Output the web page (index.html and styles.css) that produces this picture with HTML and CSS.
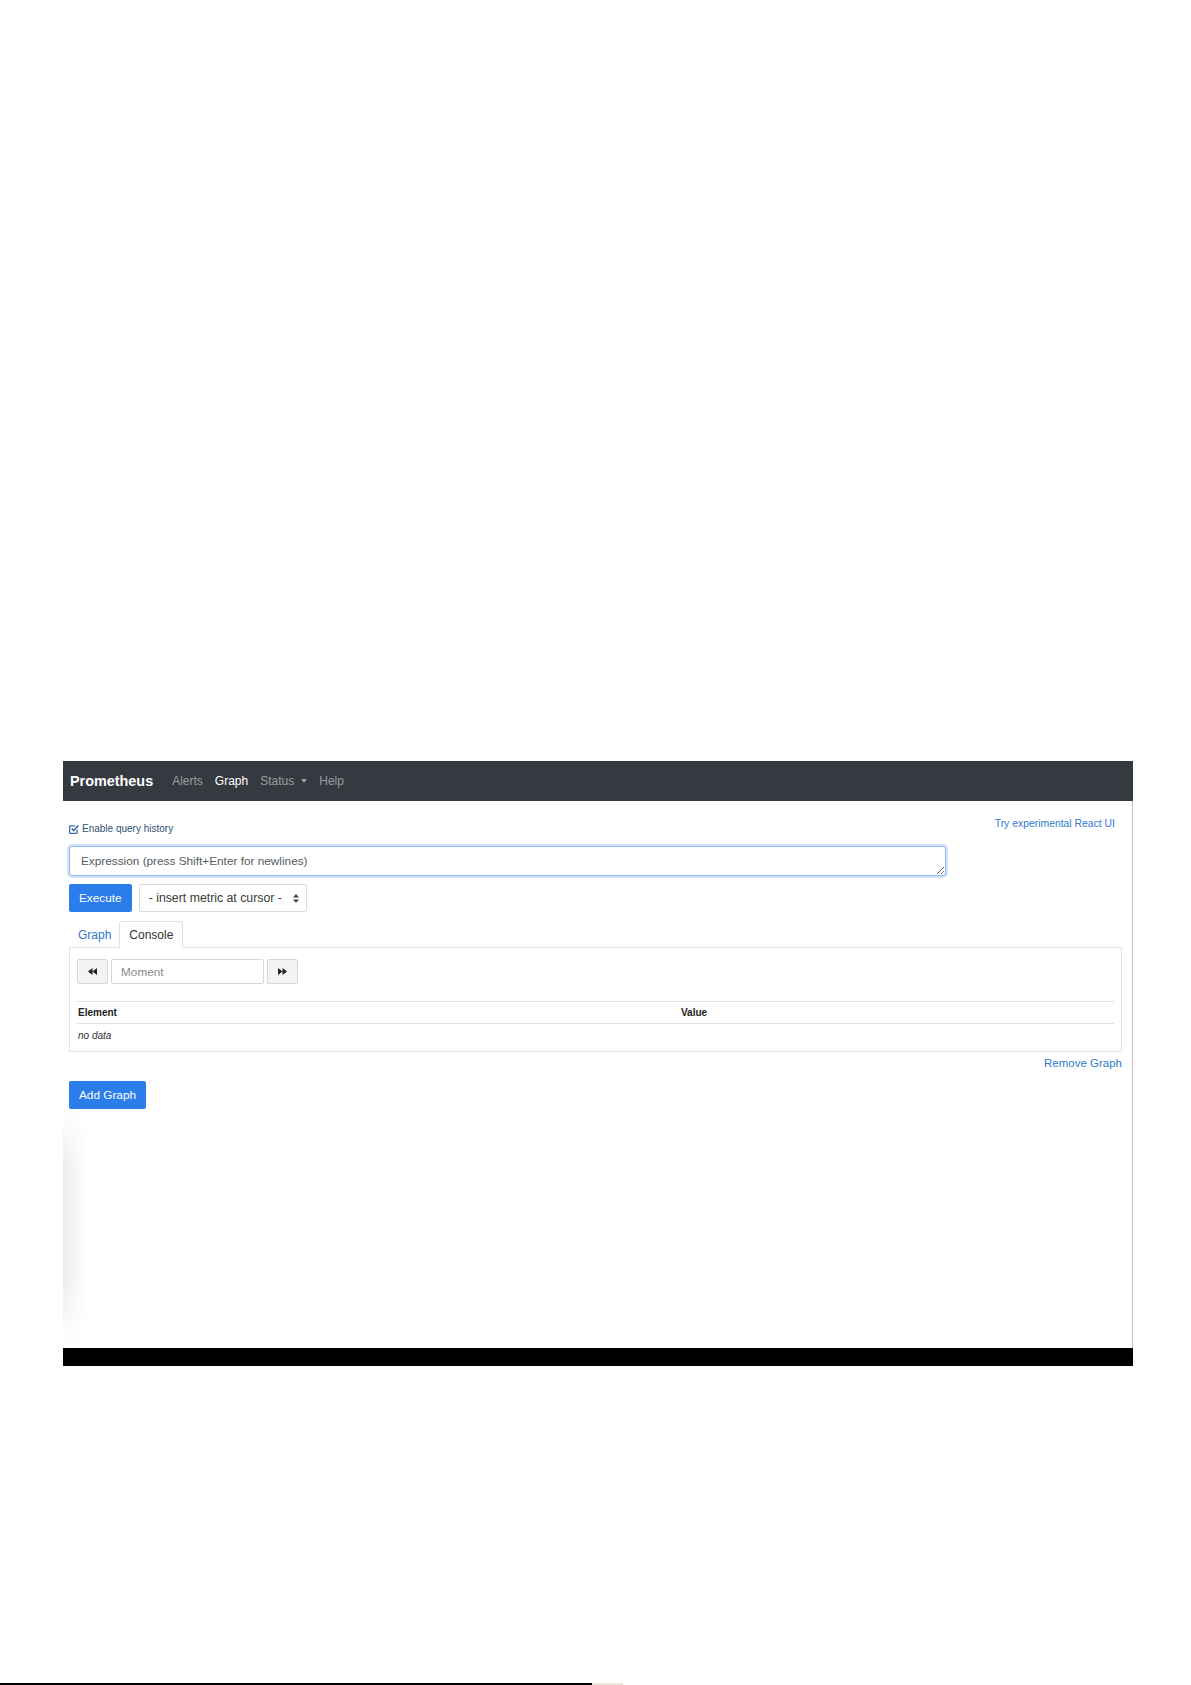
FILE: index.html
```html
<!DOCTYPE html>
<html lang="en">
<head>
  <meta charset="UTF-8" />
  <meta name="viewport" content="width=device-width, initial-scale=1.0"/>
  <title>Prometheus Time Series Collection and Processing Server</title>
  <link rel="stylesheet" href="styles.css">
</head>
<body>
  <div class="shot">
    <nav class="navbar">
      <a class="brand" href="#">Prometheus</a>
      <ul class="nav-links">
        <li><a href="#">Alerts</a></li>
        <li><a class="active" href="#">Graph</a></li>
        <li><a href="#">Status<span class="caret"></span></a></li>
        <li><a href="#">Help</a></li>
      </ul>
    </nav>

    <div class="page">
      <div class="content">
        <div class="top-row">
          <label class="history">
            <svg width="10" height="10" viewBox="0 0 16 16"><path d="M13 9v4.5a1.5 1.5 0 0 1-1.5 1.5h-9A1.5 1.5 0 0 1 1 13.5v-9A1.5 1.5 0 0 1 2.5 3H10" fill="none" stroke="#3d6fae" stroke-width="2.2"/><path d="M4.5 7.5l3 3L15 2.5" fill="none" stroke="#3d6fae" stroke-width="2.6"/></svg>
            Enable query history
          </label>
          <a class="react-link" href="#">Try experimental React UI</a>
        </div>

        <textarea class="expr" placeholder="Expression (press Shift+Enter for newlines)"></textarea>

        <div class="actions">
          <button class="btn">Execute</button>
          <div class="metric-select">
            <span>- insert metric at cursor -</span>
            <svg width="6" height="9" viewBox="0 0 6 9"><path d="M3 0l3 3.5H0z M3 9L0 5.5h6z" fill="#444"/></svg>
          </div>
        </div>

        <ul class="tabs">
          <li><a href="#">Graph</a></li>
          <li><a class="active" href="#">Console</a></li>
        </ul>

        <div class="tab-panel">
          <div class="moment-row">
            <button class="step-btn">
              <svg width="9" height="7" viewBox="0 0 9 7"><path d="M4.5 0v7L0 3.5z M9 0v7L4.5 3.5z" fill="#222"/></svg>
            </button>
            <input class="moment" type="text" placeholder="Moment">
            <button class="step-btn">
              <svg width="9" height="7" viewBox="0 0 9 7"><path d="M0 0v7l4.5-3.5z M4.5 0v7L9 3.5z" fill="#222"/></svg>
            </button>
          </div>

          <table class="data-table">
            <thead>
              <tr><th class="el">Element</th><th>Value</th></tr>
            </thead>
            <tbody>
              <tr><td colspan="2">no data</td></tr>
            </tbody>
          </table>
        </div>

        <div class="remove-row"><a href="#">Remove Graph</a></div>

        <button class="btn add">Add Graph</button>
      </div>
      <div class="fade-space"></div>
    </div>

    <div class="bottom-bar"></div>
  </div>

  <div class="page-edge">
    <span class="edge-line"></span>
    <span class="edge-mark"></span>
  </div>
</body>
</html>
```

FILE: styles.css
```css
body {
  margin: 0;
  background: #fff;
  font-family: "Liberation Sans", Arial, sans-serif;
  color: #212529;
}
.shot {
  width: 1070px;
  margin: 761px 0 0 63px;
}

/* navbar */
.navbar {
  display: flex;
  align-items: center;
  height: 40px;
  padding: 0 8px 0 7px;
  background: #343a40;
}
.brand {
  font-size: 14.4px;
  font-weight: bold;
  color: #fff;
  margin-right: 13px;
  text-decoration: none;
}
.nav-links {
  display: flex;
  list-style: none;
  margin: 0;
  padding: 0;
}
.nav-links a {
  display: block;
  padding: 0 6px;
  font-size: 12px;
  color: #9a9da0;
  text-decoration: none;
}
.nav-links a.active {
  color: #fff;
}
.caret {
  display: inline-block;
  margin-left: 7px;
  vertical-align: 2px;
  border-top: 4px solid;
  border-left: 3px solid transparent;
  border-right: 3px solid transparent;
}

/* page body */
.page {
  height: 547px;
  display: flex;
  flex-direction: column;
  background: #fff;
  border-right: 1px solid #c4c4c4;
  box-sizing: border-box;
}
.content {
  padding: 15px 10px 0 6px;
}
.top-row {
  display: flex;
  justify-content: space-between;
  align-items: flex-start;
  height: 21px;
}
.history {
  display: flex;
  align-items: center;
  gap: 3px;
  margin-top: 5px;
  line-height: 16px;
  font-size: 10px;
  color: #2f4f77;
}
.react-link {
  margin-right: 7px;
  font-size: 10.4px;
  line-height: 16px;
  color: #2f7ad0;
  text-decoration: none;
}
.expr {
  display: block;
  width: 877px;
  height: 30px;
  box-sizing: border-box;
  margin-top: 9px;
  padding: 6px 11px;
  font: 11.8px/16px "Liberation Sans", Arial, sans-serif;
  border: 1px solid #8fbcf0;
  border-radius: 3px;
  box-shadow: 0 0 0 2px #d3e4f8;
  outline: none;
  resize: vertical;
}
.expr::placeholder {
  color: #555b61;
}
.actions {
  display: flex;
  gap: 7px;
  margin-top: 8px;
}
.btn {
  height: 28px;
  padding: 0 10px;
  border: none;
  border-radius: 2px;
  background: #2b7de9;
  color: #fff;
  font: 11.8px "Liberation Sans", Arial, sans-serif;
}
.metric-select {
  display: flex;
  align-items: center;
  justify-content: space-between;
  width: 168px;
  height: 28px;
  box-sizing: border-box;
  padding: 0 7px 0 9px;
  border: 1px solid #dcdcdc;
  border-radius: 2px;
  font-size: 12.3px;
  color: #3a3a3a;
}

/* tabs */
.tabs {
  position: relative;
  z-index: 1;
  display: flex;
  list-style: none;
  margin: 9px 0 -1px;
  padding: 0;
}
.tabs a {
  display: block;
  height: 27px;
  line-height: 26px;
  box-sizing: border-box;
  padding: 0 7px 0 8px;
  font-size: 12px;
  border: 1px solid transparent;
  border-bottom: none;
  border-radius: 3px 3px 0 0;
  color: #2f7ad0;
  text-decoration: none;
}
.tabs a.active {
  padding: 0 9px;
  color: #333;
  border-color: #e0e0e0;
  background: #fff;
}
.tab-panel {
  border: 1px solid #e3e3e3;
  padding: 11px 7px 5px;
}
.moment-row {
  display: flex;
  gap: 3px;
  height: 25px;
}
.step-btn {
  display: flex;
  align-items: center;
  justify-content: center;
  width: 31px;
  height: 25px;
  padding: 0;
  border: 1px solid #d8d8d8;
  border-radius: 2px;
  background: #f3f3f3;
}
.moment {
  width: 153px;
  height: 25px;
  box-sizing: border-box;
  padding: 0 9px;
  border: 1px solid #d8d8d8;
  border-radius: 2px;
  font: 11.8px "Liberation Sans", Arial, sans-serif;
}
.moment::placeholder {
  color: #8a8a8a;
}
.data-table {
  width: 100%;
  border-collapse: collapse;
  margin-top: 17px;
  font-size: 10px;
}
.data-table th {
  text-align: left;
  font-weight: bold;
  height: 21px;
  padding: 0 1px;
  color: #222;
  border-top: 1px solid #dee2e6;
  border-bottom: 1px solid #dee2e6;
}
.data-table th.el {
  width: 601px;
}
.data-table td {
  height: 22px;
  padding: 0 1px;
  font-style: italic;
  color: #333;
}
.remove-row {
  margin-top: 2px;
  text-align: right;
  line-height: 16px;
}
.remove-row a {
  font-size: 11.5px;
  color: #2f7ad0;
  text-decoration: none;
}
.add {
  margin-top: 10px;
}
.fade-space {
  flex: 1;
  background: linear-gradient(to right, #ececec, #fff 24px);
  -webkit-mask-image: linear-gradient(to bottom, transparent, #000 25%, #000 70%, transparent);
  mask-image: linear-gradient(to bottom, transparent, #000 25%, #000 70%, transparent);
}
.bottom-bar {
  height: 18px;
  background: #000;
}

/* edge of the printed page */
.page-edge {
  display: flex;
  margin-top: 317px;
  height: 2px;
}
.edge-line {
  width: 592px;
  background: #000;
}
.edge-mark {
  width: 31px;
  background: #ece8d6;
}
```
